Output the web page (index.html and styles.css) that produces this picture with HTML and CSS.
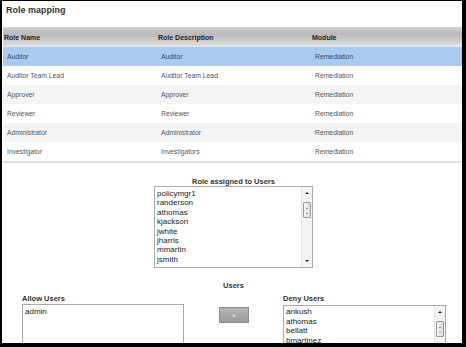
FILE: index.html
```html
<!DOCTYPE html>
<html lang="en">
<head>
  <meta charset="UTF-8">
  <title>Role mapping</title>
  <link rel="stylesheet" href="styles.css">
</head>
<body>

  <div class="frame">
    <div class="title">Role mapping</div>

    <!-- Roles table -->
    <div class="roles">
      <div class="row head"><div>Role Name</div><div>Role Description</div><div>Module</div></div>
      <div class="row sel"><div>Auditor</div><div>Auditor</div><div>Remediation</div></div>
      <div class="row"><div>Auditor Team Lead</div><div>Auditor Team Lead</div><div>Remediation</div></div>
      <div class="row alt"><div>Approver</div><div>Approver</div><div>Remediation</div></div>
      <div class="row"><div>Reviewer</div><div>Reviewer</div><div>Remediation</div></div>
      <div class="row alt"><div>Administrator</div><div>Administrator</div><div>Remediation</div></div>
      <div class="row"><div>Investigator</div><div>Investigators</div><div>Remediation</div></div>
    </div>

    <!-- Assigned users -->
    <div class="assigned">
      <div class="label">Role assigned to Users</div>
      <div class="listbox tall">
        <ul class="items">
          <li>policymgr1</li>
          <li>randerson</li>
          <li>athomas</li>
          <li>kjackson</li>
          <li>jwhite</li>
          <li>jharris</li>
          <li>mmartin</li>
          <li>jsmith</li>
        </ul>
        <div class="scroll">
          <div class="arrow up"></div>
          <div class="thumb"></div>
          <div class="fill"></div>
          <div class="arrow down"></div>
        </div>
      </div>
    </div>

    <div class="assigned users"><div class="label">Users</div></div>

    <div class="pickers">
      <div class="picker allow">
        <div class="label">Allow Users</div>
        <div class="listbox">
          <ul class="items">
            <li>admin</li>
          </ul>
        </div>
      </div>

      <button class="move">&laquo;</button>

      <div class="picker deny">
        <div class="label">Deny Users</div>
        <div class="listbox">
          <ul class="items">
            <li>ankush</li>
            <li>athomas</li>
            <li>bellatt</li>
            <li>bmartinez</li>
          </ul>
          <div class="scroll">
            <div class="arrow up"></div>
            <div class="thumb"></div>
            <div class="fill"></div>
          </div>
        </div>
      </div>
    </div>
  </div>

</body>
</html>
```

FILE: styles.css
```css
* { box-sizing: border-box; }

body {
  margin: 0;
  background: #000;
  font-family: "Liberation Sans", Arial, sans-serif;
}

.frame {
  margin: 1px 0 0 2px;
  width: 460px;
  height: 342px;
  background: #fff;
  overflow: hidden;
}

.title {
  height: 26px;
  padding-left: 4px;
  font-size: 9px;
  font-weight: bold;
  line-height: 18px;
  color: #333;
}

/* Roles table */
.roles {
  margin-left: 1px;
  border-bottom: 2px solid #e2e2e2;
}

.row {
  display: grid;
  grid-template-columns: 154px 154px 1fr;
  align-items: center;
  height: 19px;
  font-size: 6.8px;
  color: #555;
}

.row > div { padding-left: 4px; }

.row.head {
  height: 20px;
  background: linear-gradient(#d2d2d2, #b9b9b9 35%, #dcdcdc 90%, #ececec);
  font-size: 7px;
  font-weight: bold;
  color: #222;
}

.row.head > div { padding-left: 1px; }
.row.alt { background: #f4f4f4; }
.row.sel { background: #a9cbef; color: #3a4a5c; }

/* Lists */
.label {
  font-size: 7.5px;
  font-weight: bold;
  line-height: 9px;
  color: #333;
}

.assigned {
  width: 159px;
  margin: 14px 0 0 152px;
}

.assigned .label { text-align: center; }
.assigned.users { margin-top: 13px; }

.listbox {
  display: flex;
  height: 60px;
  border: 1px solid #a8a8a8;
  background: #fff;
}

.listbox.tall { height: 82px; }

.items {
  flex: 1;
  margin: 0;
  padding: 2px 0 0 2px;
  list-style: none;
  font-size: 8px;
  line-height: 9.4px;
  color: #222;
}

.scroll {
  display: flex;
  flex-direction: column;
  align-items: center;
  width: 11px;
  border-left: 1px solid #e4e4e4;
  background: #f3f3f3;
}

.arrow {
  width: 0;
  height: 0;
  margin: 5px 0;
  border-left: 2px solid transparent;
  border-right: 2px solid transparent;
}

.arrow.up { border-bottom: 2px solid #222; }
.arrow.down { border-top: 2px solid #222; }

.thumb {
  width: 8px;
  height: 16px;
  margin-top: 3px;
  border: 1px solid #9a9a9a;
  border-radius: 1px;
  background: linear-gradient(90deg, #f4f4f4, #dcdcdc);
  position: relative;
}

.thumb::after {
  content: "";
  position: absolute;
  left: 2px;
  top: 5px;
  width: 2px;
  height: 4px;
  border-top: 1px solid #999;
  border-bottom: 1px solid #999;
}

.fill { flex: 1; }

.pickers {
  display: flex;
  align-items: flex-start;
  margin-top: 4px;
  padding-left: 20px;
}

.picker.allow { width: 162px; }
.picker.allow .label { margin-bottom: 1px; }
.picker.deny { width: 163px; }
.picker.deny .label { margin-bottom: 2px; }
.picker.deny .items { padding-top: 1px; line-height: 9.5px; }

.move {
  width: 30px;
  height: 16px;
  margin: 13px 34px 0 35px;
  padding: 0;
  border: 1px solid #8c8c8c;
  background: linear-gradient(#b4b4b4, #9c9c9c);
  color: #fff;
  font-size: 6px;
  line-height: 14px;
  font-family: "Liberation Sans", Arial, sans-serif;
}
```
